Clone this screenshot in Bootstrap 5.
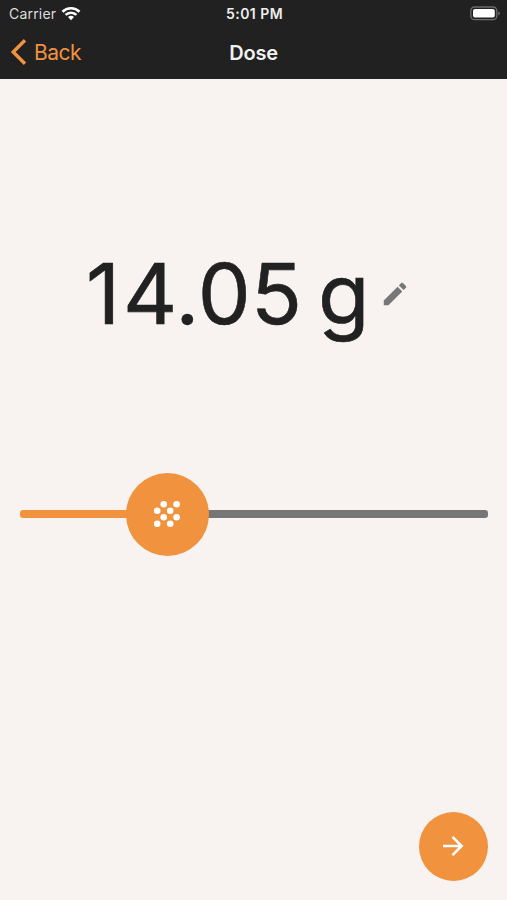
<!DOCTYPE html>
<html lang="en">
<head>
<meta charset="utf-8">
<meta name="viewport" content="width=device-width, initial-scale=1">
<title>Dose</title>
<link href="https://cdn.jsdelivr.net/npm/bootstrap@5.3.0/dist/css/bootstrap.min.css" rel="stylesheet">
<style>
body { background: #f8f2f1; color: #212121; font-family: Inter, "Liberation Sans", sans-serif; }
svg { display: block; flex: none; }
.app-header { height: 79px; background: #212121; }
.status-line { height: 27px; padding: 0 7px 0 9px; font-size: 14px; line-height: 27px; color: #eee; }
.carrier { letter-spacing: .2px; color: #ddd; }
.clock { letter-spacing: .45px; }
.title-line { height: 52px; padding: 0 10px; }
.back-link { color: #f1923f; font-size: 21px; gap: 7px; letter-spacing: -.5px; padding-top: 2px; }
.screen-title { font-size: 20px; letter-spacing: -.25px; color: #f2f2f2; }
.side { flex: 1 1 0; }
.dose-area { height: 393.5px; padding: 160px 0 0 86px; }
.dose-value { font-size: 84px; line-height: 110px; letter-spacing: .4px; word-spacing: -8.5px; -webkit-text-stroke: .6px #212121; }
.digit-wide { margin: 0 -2.5px 0 2.5px; }
.dose-edit { margin: 40px 0 0 9.5px; }
.dose-slider { height: 83px; margin: 0 19px 0 20px; }
.track { height: 8px; }
.track-on { width: 107px; background: #f1923f; border-radius: 3px 0 0 3px; }
.track-off { background: #767676; border-radius: 0 3px 3px 0; }
.thumb { width: 83px; height: 83px; margin: 0 -1px; background: #f1923f; z-index: 1; }
.thumb svg { margin: 0 1px 1px 0; }
.next-btn { width: 69px; height: 69px; margin: 0 19px 19px 0; background: #f1923f; --bs-btn-hover-bg: #e5842f; }
.next-btn svg { margin: 0 2px 1px 0; }
</style>
<script src="https://cdn.jsdelivr.net/npm/bootstrap@5.3.0/dist/js/bootstrap.bundle.min.js"></script>
</head>
<body class="vh-100 d-flex flex-column overflow-hidden">
<header class="app-header flex-shrink-0">
  <div class="status-line d-flex align-items-center">
    <div class="side d-flex align-items-center">
      <span class="carrier">Carrier</span>
      <svg class="ms-1" width="22" height="16" viewBox="-1 0.5 22 16" fill="none" stroke="#fff" stroke-width="2.7"><path d="M1.5 6.2a12.2 12.2 0 0 1 17 0M4.6 9.4a7.8 7.8 0 0 1 10.8 0"/><path d="M10 14.7 7 11.6a4.3 4.3 0 0 1 6 0z" fill="#fff" stroke="none"/></svg>
    </div>
    <span class="clock fw-semibold">5:01 PM</span>
    <div class="side d-flex justify-content-end">
      <svg width="30" height="15" viewBox="0 0 30 15"><rect x=".8" y="1" width="26" height="12.6" rx="3.7" fill="none" stroke="#6c6c6c" stroke-width="1.3"/><rect x="3" y="3.1" width="21.8" height="8.5" rx="2" fill="#fff"/><path d="M28.3 5.2q3 2.1 0 4.2z" fill="#777"/></svg>
    </div>
  </div>
  <nav class="title-line d-flex align-items-center">
    <div class="side">
      <a class="back-link d-inline-flex align-items-center text-decoration-none" href="#">
        <svg width="17" height="26" viewBox="0 0 17 26" fill="none" stroke="currentColor" stroke-width="3.4"><path d="M15 1.2 3.2 13 15 24.8"/></svg>
        <span>Back</span>
      </a>
    </div>
    <h1 class="screen-title fw-semibold mb-0">Dose</h1>
    <div class="side"></div>
  </nav>
</header>
<main class="flex-grow-1 d-flex flex-column">
  <section class="dose-area d-flex align-items-start flex-shrink-0">
    <span class="dose-value text-nowrap">1<span class="digit-wide">4</span>.05 g</span>
    <button class="dose-edit btn p-0 border-0" type="button" aria-label="Edit dose">
      <svg width="30" height="30" viewBox="0 0 24 24" fill="#777"><path d="M3 17.25V21h3.75L17.81 9.94l-3.75-3.75zM20.71 7.04a1 1 0 0 0 0-1.41l-2.34-2.34a1 1 0 0 0-1.41 0l-1.83 1.83 3.75 3.75z"/></svg>
    </button>
  </section>
  <section class="dose-slider d-flex align-items-center flex-shrink-0">
    <div class="track track-on flex-shrink-0"></div>
    <div class="thumb rounded-circle d-flex align-items-center justify-content-center flex-shrink-0">
      <svg width="28" height="28" viewBox="0 0 28 28" fill="#fff"><circle cx="10.7" cy="4.2" r="3.3"/><circle cx="23.6" cy="4.2" r="3.3"/><circle cx="4.2" cy="10.7" r="3.3"/><circle cx="17.2" cy="10.7" r="3.3"/><circle cx="10.7" cy="17.2" r="3.3"/><circle cx="23.6" cy="17.2" r="3.3"/><circle cx="4.2" cy="23.7" r="3.3"/><circle cx="17.2" cy="23.7" r="3.3"/></svg>
    </div>
    <div class="track track-off flex-grow-1"></div>
  </section>
  <button class="next-btn btn rounded-circle border-0 p-0 mt-auto ms-auto d-flex align-items-center justify-content-center" type="button" aria-label="Next">
    <svg width="22" height="22" viewBox="0 0 22 22" fill="none" stroke="#fff" stroke-width="2.6"><path d="M1 11H19.4M10.5 1.8 19.6 11l-9.1 9.2"/></svg>
  </button>
</main>
</body>
</html>
